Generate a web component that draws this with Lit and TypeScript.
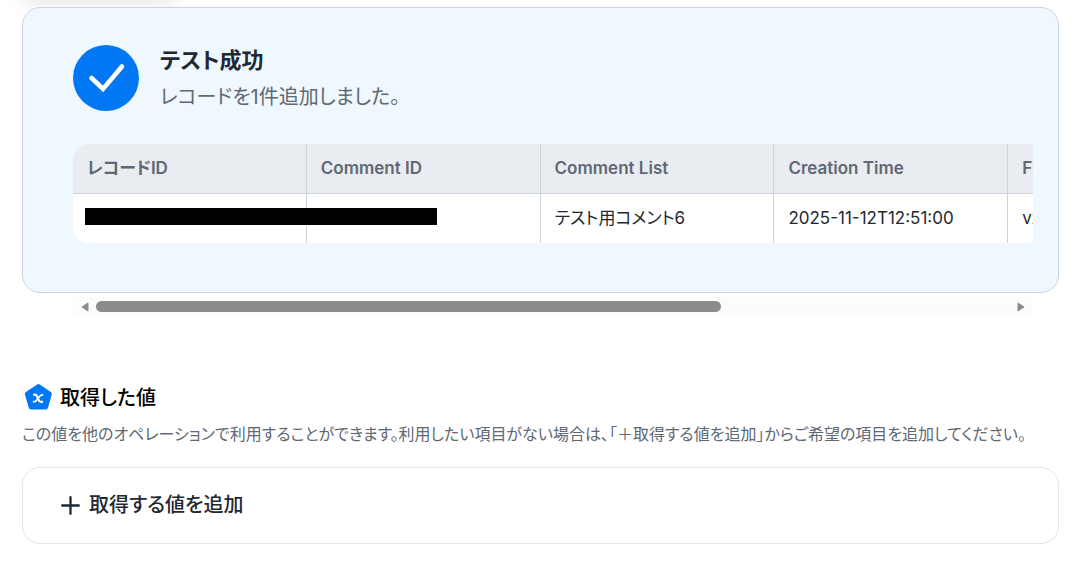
import { LitElement, html, css, svg } from "lit";
import { customElement } from "lit/decorators.js";

const columns = ["レコードID", "Comment ID", "Comment List", "Creation Time", "Fi"];
const record = ["", "", "テスト用コメント6", "2025-11-12T12:51:00", "vx"];

@customElement("app-root")
export class AppRoot extends LitElement {
  static styles = css`
    :host {
      display: block;
      overflow: hidden;
      background: #fff;
      color: #222831;
      font-family: Inter, "Noto Sans CJK JP", sans-serif;
      font-feature-settings: "palt";
    }
    * { box-sizing: border-box; }
    h2, h3, p { margin: 0; }
    .top { height: 7px; padding-left: 28px; }
    .raised { width: 140px; height: 0; box-shadow: 0 -8px 20px 6px rgba(0, 0, 0, 0.18); }
    .main { padding: 0 24px 18px 22px; }
    .result {
      padding: 36px 25px 49px 50px;
      border: 1px solid #cbd5e0;
      border-radius: 18px;
      background: #eff7ff;
    }
    .status { display: flex; align-items: center; gap: 21px; }
    .check { width: 66px; height: 66px; flex: none; display: block; }
    .title { font-size: 22px; line-height: 32px; font-weight: 600; }
    .message { font-size: 20px; line-height: 30px; margin-top: 6px; color: #5f6873; }
    .viewport { margin-top: 32px; overflow: hidden; border-radius: 16px 0 0 16px; }
    .records { border-collapse: separate; border-spacing: 0; table-layout: fixed; width: 1169px; background: #fff; }
    th, td {
      position: relative;
      padding: 0 14px 2px;
      text-align: left;
      font-size: 17px;
      line-height: 24px;
      white-space: nowrap;
      border-right: 1px solid #ced4dc;
    }
    th { height: 50px; font-weight: 600; color: #5f6873; background: #e9ecf1; border-bottom: 1px solid #ced4dc; }
    td { height: 49px; color: #222831; }
    .redacted { position: absolute; z-index: 1; left: 12px; top: 14px; width: 352px; height: 17px; background: #000; }
    .scroll {
      display: flex;
      align-items: center;
      gap: 7px;
      height: 19px;
      margin: 4px 26px 0 51px;
      padding: 0 8px;
      background: #fcfcfc;
    }
    .arrow { width: 8px; height: 10px; flex: none; }
    .track { flex: 1; }
    .thumb { width: 68.4%; height: 11px; border-radius: 6px; background: #8b8b8b; }
    .heading { display: flex; align-items: center; gap: 6px; margin-top: 66px; color: #000; }
    .pentagon { width: 32px; height: 32px; flex: none; }
    .heading h3 { font-size: 20px; line-height: 32px; font-weight: 500; }
    .note { margin-top: 8px; font-size: 16px; line-height: 24px; color: #5f6873; }
    .add {
      display: flex;
      align-items: center;
      gap: 9px;
      width: 100%;
      margin-top: 21px;
      padding: 22px 38px;
      border: 1px solid #e5e5e5;
      border-radius: 18px;
      background: #fff;
      color: #222831;
      font-family: inherit;
      font-feature-settings: inherit;
      font-size: 20px;
      line-height: 31px;
      font-weight: 500;
      text-align: left;
    }
    .plus { width: 19px; height: 19px; flex: none; }
  `;

  private arrow(path: string) {
    return html`<svg class="arrow" viewBox="0 0 8 10" aria-hidden="true">${svg`<path d=${path} fill="#8b8b8b" stroke="#8b8b8b" stroke-linejoin="round"/>`}</svg>`;
  }

  render() {
    return html`
      <div class="top"><div class="raised"></div></div>
      <main class="main">
        <section class="result">
          <div class="status">
            <svg class="check" viewBox="0 0 66 66" aria-hidden="true">
              <circle cx="33" cy="33" r="33" fill="#0277f4" />
              <path d="M18.5 33 30 44 49 21.5" fill="none" stroke="#fff" stroke-width="4.6" stroke-linecap="round" />
            </svg>
            <div>
              <h2 class="title">テスト成功</h2>
              <p class="message">レコードを1件追加しました。</p>
            </div>
          </div>
          <div class="viewport">
            <table class="records">
              <thead>
                <tr>${columns.map((name) => html`<th scope="col">${name}</th>`)}</tr>
              </thead>
              <tbody>
                <tr>${record.map((value, i) => html`<td>${i === 0 ? html`<span class="redacted"></span>` : value}</td>`)}</tr>
              </tbody>
            </table>
          </div>
        </section>
        <div class="scroll">
          ${this.arrow("M7 1V9L1 5Z")}
          <div class="track"><div class="thumb"></div></div>
          ${this.arrow("M1 1V9L7 5Z")}
        </div>
        <section>
          <div class="heading">
            <svg class="pentagon" viewBox="0 0 32 32" aria-hidden="true">
              <path d="M16.5 4.3 27.5 12 23.8 25.2H9L5.2 12Z" fill="#0277f4" stroke="#0277f4" stroke-width="4.6" stroke-linejoin="round" />
              <path d="M12.2 12.7C14.2 12.3 14.7 13.3 15.8 16.2C17 19.3 17.8 20.5 20 19.8" fill="none" stroke="#fff" stroke-width="2.3" stroke-linecap="round" />
              <path d="M20.6 12.9C18.6 12.3 17.6 14 16 16.4C14.4 18.9 13.6 20.3 11.6 19.7" fill="none" stroke="#fff" stroke-width="1.7" stroke-linecap="round" />
            </svg>
            <h3>取得した値</h3>
          </div>
          <p class="note">この値を他のオペレーションで利用することができます。利用したい項目がない場合は、「＋取得する値を追加」からご希望の項目を追加してください。</p>
          <button class="add" type="button">
            <svg class="plus" viewBox="0 0 19 19" aria-hidden="true">
              <path d="M9.5 1.2V17.8M1.2 9.5H17.8" stroke="#222831" stroke-width="2.3" stroke-linecap="round" />
            </svg>
            <span>取得する値を追加</span>
          </button>
        </section>
      </main>
    `;
  }
}
